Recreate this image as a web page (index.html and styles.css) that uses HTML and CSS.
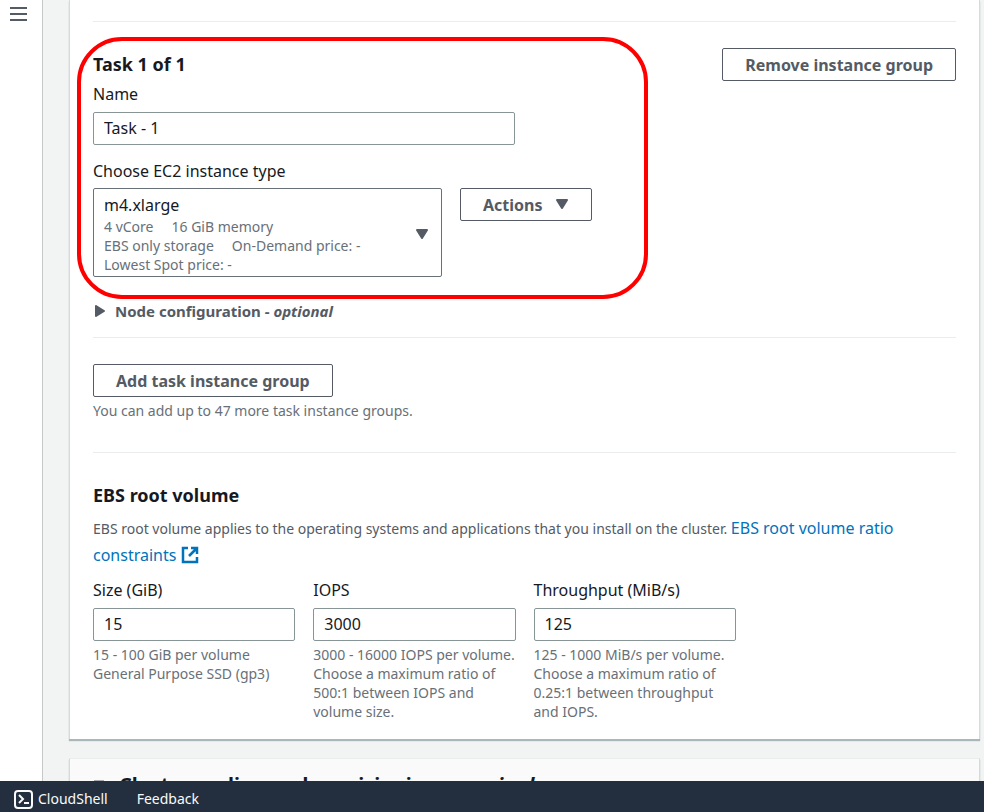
FILE: index.html
```html
<!DOCTYPE html>
<html lang="en">
<head>
<meta charset="utf-8">
<meta name="viewport" content="width=device-width, initial-scale=1">
<title>Create cluster</title>
<link rel="stylesheet" href="styles.css">
</head>
<body>
<div class="shell">
  <nav class="rail" aria-label="Navigation">
    <button class="menu-button" type="button" aria-label="Open navigation">
      <svg width="17" height="15" viewBox="0 0 17 15" fill="none" stroke="currentColor" stroke-width="2"><path d="M0 2h17M0 8h17M0 14h17"/></svg>
    </button>
  </nav>
  <main class="content">
    <section class="card">
      <hr class="rule">
      <div class="group">
        <div class="group-form">
          <h3 class="title">Task 1 of 1</h3>
          <label class="label" for="name">Name</label>
          <input class="input input-name" id="name" type="text" value="Task - 1">
          <span class="label label-type" id="type-label">Choose EC2 instance type</span>
          <div class="type-row">
            <button class="type-select" type="button" aria-haspopup="listbox" aria-labelledby="type-label type-value">
              <span class="type-text" id="type-value">
                <span class="type-name">m4.xlarge</span>
                <span class="type-tags"><span>4 vCore</span><span>16 GiB memory</span></span>
                <span class="type-tags"><span>EBS only storage</span><span>On-Demand price: -</span></span>
                <span class="type-tags"><span>Lowest Spot price: -</span></span>
              </span>
              <svg class="caret" width="14" height="11" viewBox="0 0 14 11" fill="currentColor"><path d="M2 1h10L7 9z" stroke="currentColor" stroke-width="2" stroke-linejoin="round"/></svg>
            </button>
            <button class="button" type="button">Actions
              <svg class="caret" width="14" height="11" viewBox="0 0 14 11" fill="currentColor"><path d="M2 1h10L7 9z" stroke="currentColor" stroke-width="2" stroke-linejoin="round"/></svg>
            </button>
          </div>
        </div>
        <button class="button" type="button">Remove instance group</button>
        <div class="highlight"></div>
      </div>
      <button class="expander" type="button" aria-expanded="false">
        <svg width="10" height="12" viewBox="0 0 10 12" fill="currentColor"><path d="M1 1v10l8-5z" stroke="currentColor" stroke-width="2" stroke-linejoin="round"/></svg>
        <span>Node configuration - <em>optional</em></span>
      </button>
      <hr class="rule">
      <div class="add-group">
        <button class="button" type="button">Add task instance group</button>
        <p class="hint">You can add up to 47 more task instance groups.</p>
      </div>
      <hr class="rule">
      <h3 class="title title-volume">EBS root volume</h3>
      <p class="description">EBS root volume applies to the operating systems and applications that you install on the cluster. <a class="link" href="#">EBS root volume ratio constraints <svg class="external" width="18" height="18" viewBox="0 0 18 18" fill="none" stroke="currentColor" stroke-width="2"><path d="M7 2H2v14h14v-5M10 2h6v6M16 2L8 10" stroke-width="2.500"/></svg></a></p>
      <div class="fields">
        <div>
          <label class="label" for="size">Size (GiB)</label>
          <input class="input" id="size" type="text" value="15" aria-describedby="size-hint">
          <p class="hint" id="size-hint">15 - 100 GiB per volume<br>General Purpose SSD (gp3)</p>
        </div>
        <div>
          <label class="label" for="iops">IOPS</label>
          <input class="input" id="iops" type="text" value="3000" aria-describedby="iops-hint">
          <p class="hint" id="iops-hint">3000 - 16000 IOPS per volume.<br>Choose a maximum ratio of<br>500:1 between IOPS and<br>volume size.</p>
        </div>
        <div>
          <label class="label" for="throughput">Throughput (MiB/s)</label>
          <input class="input" id="throughput" type="text" value="125" aria-describedby="throughput-hint">
          <p class="hint" id="throughput-hint">125 - 1000 MiB/s per volume.<br>Choose a maximum ratio of<br>0.25:1 between throughput<br>and IOPS.</p>
        </div>
      </div>
    </section>
    <section class="card card-next">
      <h2 class="section-title">
        <svg class="caret" width="12" height="10" viewBox="0 0 12 10" fill="currentColor"><path d="M1 1h10L6 9z" stroke="currentColor" stroke-linejoin="round"/></svg>
        <span>Cluster scaling and provisioning - <em>required</em></span>
      </h2>
    </section>
  </main>
</div>
<footer class="footer">
  <a class="footer-link" href="#">
    <svg width="20" height="20" viewBox="0 0 20 20" fill="none" stroke="currentColor" stroke-width="2"><rect x="2" y="2" width="17" height="17" rx="3"/><path d="M6 6l4 4-4 4M11 14h5"/></svg>
    CloudShell
  </a>
  <a class="footer-link" href="#">Feedback</a>
</footer>
</body>
</html>
```
FILE: styles.css
```css
* {
  box-sizing: border-box;
}

body {
  margin: 0;
  height: 100vh;
  display: flex;
  flex-direction: column;
  background: #f2f3f3;
  color: #16191f;
  font: 16px/20px "Noto Sans", sans-serif;
}

button,
input {
  font: inherit;
  color: inherit;
}

p,
h2,
h3 {
  margin: 0;
}

svg {
  flex: none;
}

.shell {
  flex: 1;
  min-height: 0;
  display: flex;
  overflow: hidden;
}

.rail {
  flex: none;
  width: 43px;
  background: #fff;
  border-right: 1px solid #c4c8c8;
}

.menu-button {
  display: block;
  margin: 6px 0 0 10px;
  padding: 0;
  border: 0;
  background: none;
  color: #545b64;
  line-height: 0;
}

.content {
  flex: 1;
  min-width: 0;
  padding: 0 4px 0 26px;
}

.card {
  padding: 21px 23px 18px;
  background: #fff;
  border: solid #d5dbdb;
  border-width: 0 1px;
  box-shadow: 0 2px 1px #aab7b8;
}

.card-next {
  margin-top: 19px;
  padding: 12px 23px;
  background: #fafafa;
  border-top: 1px solid #eaeded;
}

.rule {
  margin: 0;
  border: 0;
  border-top: 1px solid #eaeded;
}

.group {
  position: relative;
  display: flex;
  justify-content: space-between;
  align-items: flex-start;
  margin: 26px 0 24px;
}

.group-form {
  flex: 1;
}

.highlight {
  position: absolute;
  inset: -11px auto -22px -16px;
  width: 571px;
  border: 4px solid #fe0000;
  border-radius: 45px;
  pointer-events: none;
}

.title {
  font-size: 18px;
  line-height: 24px;
  padding: 4px 0;
}

.title-volume {
  margin-top: 26px;
}

.label {
  display: block;
  padding: 4px 0;
}

.input {
  display: block;
  width: 100%;
  height: 33px;
  margin-top: 4px;
  padding: 0 10px 1px;
  border: 1px solid #879596;
  border-radius: 2px;
  background: #fff;
}

.input-name {
  width: 422px;
  max-width: 100%;
}

.label-type {
  margin: 12px 0 3px;
}

.type-row {
  display: flex;
  align-items: flex-start;
  gap: 18px;
}

.type-select {
  display: flex;
  align-items: center;
  justify-content: space-between;
  width: 349px;
  padding: 6px 12px 2px 10px;
  border: 1px solid #687078;
  border-radius: 2px;
  background: #fff;
  text-align: left;
}

.type-name {
  display: block;
  margin-bottom: 2px;
}

.type-tags {
  display: flex;
  gap: 18px;
  color: #687078;
  font-size: 14px;
  line-height: 19px;
}

.caret {
  color: #545b64;
}

.button {
  display: inline-flex;
  align-items: center;
  gap: 12px;
  height: 33px;
  padding: 0 22px;
  border: 1px solid #545b64;
  border-radius: 2px;
  background: #fff;
  color: #545b64;
  font-weight: 700;
}

.expander {
  display: flex;
  align-items: center;
  gap: 10px;
  margin-bottom: 16px;
  padding: 0 2px;
  border: 0;
  background: none;
  color: #545b64;
  font-size: 15px;
  font-weight: 700;
}

.add-group {
  margin: 26px 0 32px;
}

.hint {
  margin-top: 4px;
  color: #687078;
  font-size: 14px;
  line-height: 19px;
  white-space: nowrap;
}

.description {
  margin: 4px 0 7px;
  color: #545b64;
  font-size: 14px;
  line-height: 26px;
}

.link {
  color: #0073bb;
  font-size: 16px;
  text-decoration: none;
}

.external {
  vertical-align: -3px;
}

.fields {
  display: grid;
  grid-template-columns: repeat(4, 1fr);
  gap: 18px;
}

.section-title {
  display: flex;
  align-items: center;
  gap: 14px;
  font-size: 20px;
  line-height: 28px;
}

.footer {
  flex: none;
  display: flex;
  align-items: center;
  gap: 29px;
  height: 31px;
  padding: 4px 13px 0;
  background: #232f3e;
}

.footer-link {
  display: flex;
  align-items: center;
  gap: 5px;
  color: #fafafa;
  font-size: 14px;
  text-decoration: none;
}
```
